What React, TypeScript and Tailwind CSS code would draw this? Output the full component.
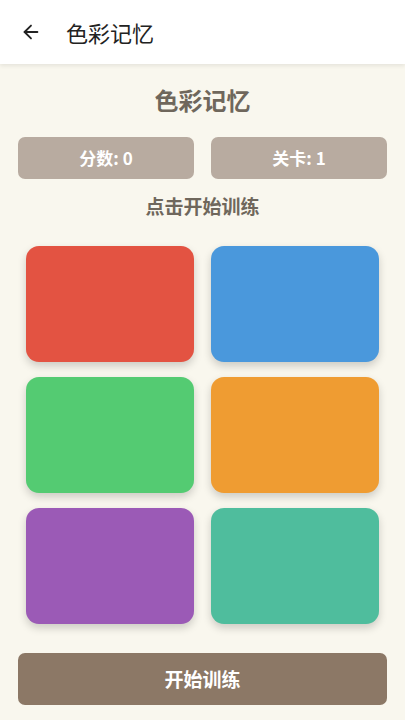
import { ArrowLeft } from 'lucide-react'

const tiles = ['#e35342', '#4a98dc', '#54cb72', '#ef9c32', '#9b5ab6', '#4fbd9d']

export default function App() {
  return (
    <div
      className="w-[405px] h-[720px] flex flex-col bg-[#f9f7ee] overflow-hidden"
      style={{ fontFamily: '"Noto Sans CJK SC", "Noto Sans", sans-serif' }}
    >
      {/* Top bar */}
      <div className="h-[64px] bg-white flex items-center shrink-0 shadow-[0_2px_4px_rgba(0,0,0,0.08)] z-10">
        <ArrowLeft size={22} strokeWidth={2} className="ml-[20px] text-[#222]" />
        <div className="ml-[24px] text-[22px] text-[#222]">色彩记忆</div>
      </div>

      <div className="flex-1 flex flex-col">
        <h1 className="mt-[21px] text-center text-[24px] font-bold leading-[30px] text-[#6f675c]">色彩记忆</h1>

        {/* Stats */}
        <div className="mt-[22px] px-[18px] grid grid-cols-2 gap-x-[17px]">
          <div className="h-[42px] rounded-[7px] bg-[#b8aba0] flex items-center justify-center text-white font-bold text-[17px]">
            分数: 0
          </div>
          <div className="h-[42px] rounded-[7px] bg-[#b8aba0] flex items-center justify-center text-white font-bold text-[17px]">
            关卡: 1
          </div>
        </div>

        <div className="mt-[14px] text-center text-[19px] font-bold leading-[26px] text-[#6f675c]">点击开始训练</div>

        {/* Color tiles */}
        <div className="mt-[27px] px-[26px] grid grid-cols-2 gap-x-[17px] gap-y-[15px]">
          {tiles.map((c) => (
            <div
              key={c}
              className="h-[116px] rounded-[13px] shadow-[0_4px_8px_rgba(0,0,0,0.18)]"
              style={{ backgroundColor: c }}
            />
          ))}
        </div>

        {/* Start button */}
        <div className="mt-[29px] px-[18px]">
          <button className="w-full h-[52px] rounded-[7px] bg-[#8c7866] text-white font-bold text-[19px]">
            开始训练
          </button>
        </div>
      </div>
    </div>
  )
}
